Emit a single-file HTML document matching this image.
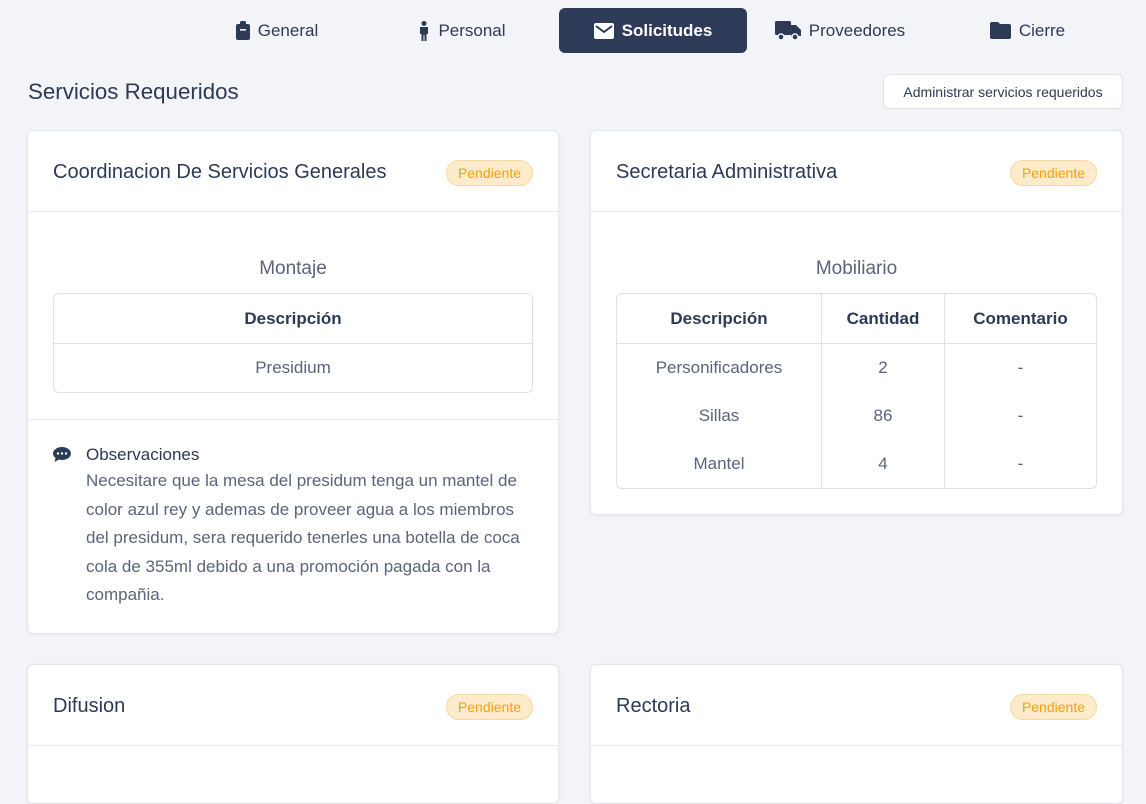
<!DOCTYPE html>
<html><head><meta charset="utf-8"><style>
*{box-sizing:border-box;margin:0;padding:0}
body{width:1146px;height:786px;overflow:hidden;background:#f3f4f7;font-family:"Liberation Sans",sans-serif;color:#2d3a55;position:relative}
.tab{position:absolute;top:8px;height:45px;display:flex;align-items:center;justify-content:center;font-size:17px;color:#2d3a55;gap:8px}
.tab.act{background:#2d3a58;color:#fff;border-radius:6px;font-weight:bold}
h2{position:absolute;left:28px;top:79px;font-size:22.3px;font-weight:normal;color:#2d3a55}
.btn{position:absolute;left:883px;top:74px;width:240px;height:35px;background:#fff;border:1px solid #e0e3ea;border-radius:6px;font-size:14px;display:flex;align-items:center;justify-content:center;color:#2d3a55}
.card{position:absolute;background:#fff;border:1px solid #e3e6ec;border-radius:6px;box-shadow:0 1px 3px rgba(0,0,0,.06);overflow:hidden}
.hd{height:81px;border-bottom:1px solid #e8eaef;display:flex;align-items:center;justify-content:space-between;padding:3px 25px 0;font-size:20px}
.badge{font-size:14px;color:#f5a00c;background:#fdebcc;border:1px solid #f8d9a0;border-radius:14px;padding:4px 11px}
.sub{text-align:center;font-size:19px;color:#5b6478;font-weight:300;margin-top:46px}
table{border-collapse:separate;border-spacing:0;border:1px solid #dde0e6;border-radius:6px;margin:13px 25px 0;width:calc(100% - 50px);font-size:17px}
th{height:50px;border-bottom:1px solid #dde0e6;font-weight:bold;color:#2d3a55}
td{text-align:center;color:#5b6478;height:48px}
.vl{border-right:1px solid #dde0e6}
</style></head><body>
<div class="tab" style="left:212px;width:130px"><svg width="14" height="19" viewBox="0 0 14 19"><rect x="0" y="3" width="14" height="16" rx="2" fill="#2d3a55"/><rect x="4" y="0" width="6" height="5" rx="1.5" fill="#2d3a55"/><rect x="4" y="8" width="6" height="1.6" fill="#fff"/></svg>General</div>
<div class="tab" style="left:392px;width:140px"><svg width="12" height="20" viewBox="0 0 12 20"><circle cx="6" cy="2.5" r="2.5" fill="#2d3a55"/><path d="M2 6h8v7H8.5v7h-2v-6h-1v6h-2v-7H2z" fill="#2d3a55"/></svg>Personal</div>
<div class="tab act" style="left:559px;width:188px"><svg width="20" height="16" viewBox="0 0 20 16"><rect width="20" height="16" rx="2" fill="#fff"/><path d="M2 3l8 6 8-6" stroke="#2d3a58" stroke-width="2" fill="none"/></svg>Solicitudes</div>
<div class="tab" style="left:765px;width:150px"><svg width="26" height="20" viewBox="0 0 26 20"><rect x="0" y="0" width="16" height="14" rx="1.5" fill="#2d3a55"/><path d="M16 4h5l5 5v6H16z" fill="#2d3a55"/><circle cx="6" cy="16" r="3" fill="#2d3a55" stroke="#f3f4f7" stroke-width="1.5"/><circle cx="20" cy="16" r="3" fill="#2d3a55" stroke="#f3f4f7" stroke-width="1.5"/></svg>Proveedores</div>
<div class="tab" style="left:975px;width:105px"><svg width="21" height="17" viewBox="0 0 21 17"><path d="M0 2a2 2 0 012-2h6l2 2h9a2 2 0 012 2v11a2 2 0 01-2 2H2a2 2 0 01-2-2z" fill="#2d3a55"/></svg>Cierre</div>
<h2>Servicios Requeridos</h2>
<div class="btn">Administrar servicios requeridos</div>

<div class="card" style="left:27px;top:130px;width:532px;height:504px">
<div class="hd">Coordinacion De Servicios Generales<span class="badge">Pendiente</span></div>
<div class="sub">Montaje</div>
<table><tr><th>Descripción</th></tr><tr><td>Presidium</td></tr></table>
<div style="border-top:1px solid #e8eaef;margin-top:26px;padding:23px 25px 0 58px;position:relative">
<svg style="position:absolute;left:25px;top:27px" width="18" height="16" viewBox="0 0 18 16"><path d="M9 0C4 0 0 3 0 6.5c0 1.8 1 3.4 2.6 4.5L1.5 15l4.5-2.5c1 .3 2 .5 3 .5 5 0 9-3 9-6.5S14 0 9 0z" fill="#2d3a55"/><circle cx="5" cy="6.5" r="1.2" fill="#fff"/><circle cx="9" cy="6.5" r="1.2" fill="#fff"/><circle cx="13" cy="6.5" r="1.2" fill="#fff"/></svg>
<div style="font-size:17px;color:#2d3a55;line-height:24px">Observaciones</div>
<div style="font-size:17px;color:#5b6478;line-height:28.5px;width:445px">Necesitare que la mesa del presidum tenga un mantel de color azul rey y ademas de proveer agua a los miembros del presidum, sera requerido tenerles una botella de coca cola de 355ml debido a una promoción pagada con la compañia.</div>
</div></div>

<div class="card" style="left:590px;top:130px;width:533px;height:385px">
<div class="hd">Secretaria Administrativa<span class="badge">Pendiente</span></div>
<div class="sub">Mobiliario</div>
<table><tr><th class="vl" style="width:205px">Descripción</th><th class="vl" style="width:123px">Cantidad</th><th>Comentario</th></tr>
<tr><td class="vl">Personificadores</td><td class="vl">2</td><td>-</td></tr>
<tr><td class="vl">Sillas</td><td class="vl">86</td><td>-</td></tr>
<tr><td class="vl">Mantel</td><td class="vl">4</td><td>-</td></tr></table>
</div>

<div class="card" style="left:27px;top:664px;width:532px;height:140px"><div class="hd">Difusion<span class="badge">Pendiente</span></div></div>
<div class="card" style="left:590px;top:664px;width:533px;height:140px"><div class="hd">Rectoria<span class="badge">Pendiente</span></div></div>
</body></html>
